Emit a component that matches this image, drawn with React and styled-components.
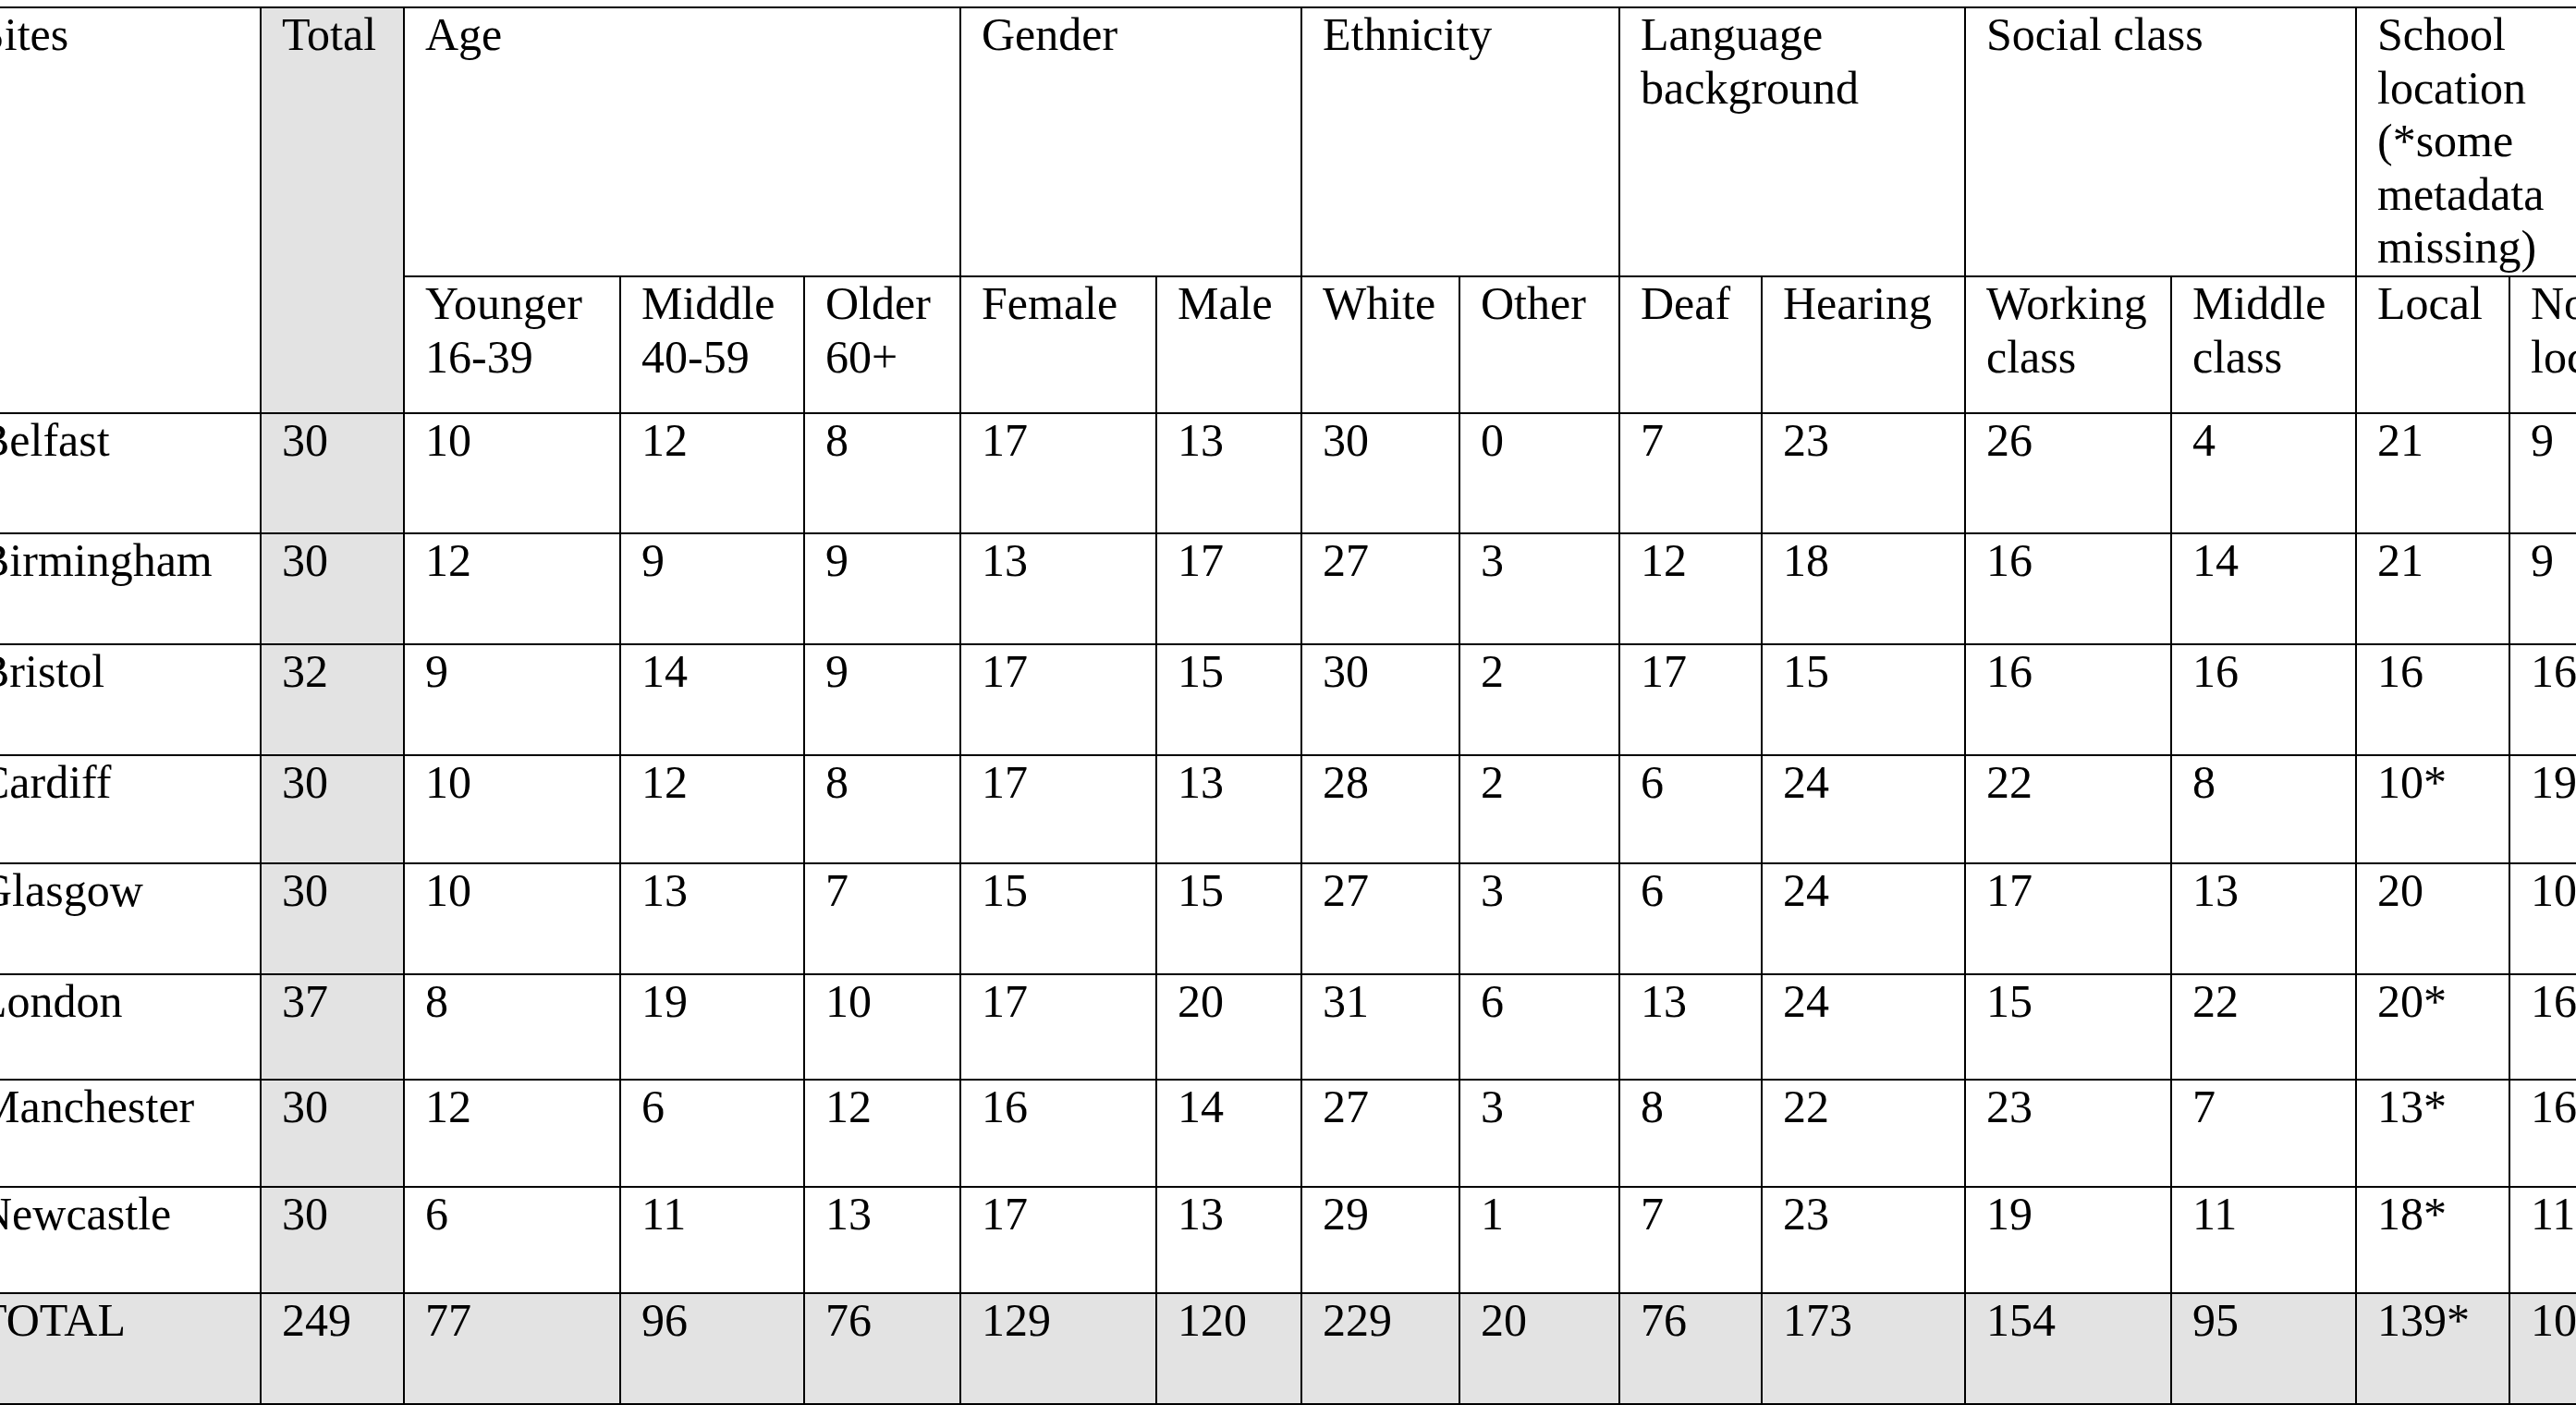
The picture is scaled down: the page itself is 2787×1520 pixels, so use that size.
import React from "react";
import styled, { createGlobalStyle } from "styled-components";

const GlobalStyle = createGlobalStyle`
  html, body {
    margin: 0;
    padding: 0;
    overflow: hidden;
    background: #ffffff;
  }
  body {
    font-family: "Liberation Serif", "Times New Roman", serif;
    color: #000000;
  }
`;

const Viewport = styled.div`
  width: 2787px;
  height: 1520px;
  overflow: hidden;
  padding-top: 7px;
  box-sizing: border-box;
`;

const COLUMN_WIDTHS = [326, 153, 232, 197, 167, 210, 155, 169, 171, 152, 218, 221, 198, 164, 168];
const ROW_HEIGHTS = [289, 146, 128, 118, 118, 115, 118, 112, 114, 113, 118];

const Sheet = styled.div`
  display: grid;
  grid-template-columns: ${COLUMN_WIDTHS.map((w) => `${w}px`).join(" ")};
  grid-template-rows: ${ROW_HEIGHTS.map((h) => `${h}px`).join(" ")};
  gap: 2px;
  padding: 2px;
  width: max-content;
  margin-left: -47px;
  background: #000000;
`;

const Cell = styled.div`
  grid-column: span ${(p) => p.$span || 1};
  grid-row: span ${(p) => p.$rows || 1};
  background: ${(p) => (p.$shade ? "#e3e3e3" : "#ffffff")};
  padding: 0 22px;
  font-size: 50px;
  line-height: 57.5px;
  overflow: visible;
  white-space: normal;
`;

const groups = [
  { label: "Age", span: 3 },
  { label: "Gender", span: 2 },
  { label: "Ethnicity", span: 2 },
  { label: "Language background", span: 2 },
  { label: "Social class", span: 2 },
  { label: "School location (*some metadata missing)", span: 2 },
];

const subHeads = [
  "Younger 16-39",
  "Middle 40-59",
  "Older 60+",
  "Female",
  "Male",
  "White",
  "Other",
  "Deaf",
  "Hearing",
  "Working class",
  "Middle class",
  "Local",
  "Not local",
];

const rows = [
  ["Belfast", "30", "10", "12", "8", "17", "13", "30", "0", "7", "23", "26", "4", "21", "9"],
  ["Birmingham", "30", "12", "9", "9", "13", "17", "27", "3", "12", "18", "16", "14", "21", "9"],
  ["Bristol", "32", "9", "14", "9", "17", "15", "30", "2", "17", "15", "16", "16", "16", "16"],
  ["Cardiff", "30", "10", "12", "8", "17", "13", "28", "2", "6", "24", "22", "8", "10*", "19"],
  ["Glasgow", "30", "10", "13", "7", "15", "15", "27", "3", "6", "24", "17", "13", "20", "10"],
  ["London", "37", "8", "19", "10", "17", "20", "31", "6", "13", "24", "15", "22", "20*", "16"],
  ["Manchester", "30", "12", "6", "12", "16", "14", "27", "3", "8", "22", "23", "7", "13*", "16"],
  ["Newcastle", "30", "6", "11", "13", "17", "13", "29", "1", "7", "23", "19", "11", "18*", "11"],
];

const totalRow = ["TOTAL", "249", "77", "96", "76", "129", "120", "229", "20", "76", "173", "154", "95", "139*", "106"];

export default function App() {
  return (
    <>
      <GlobalStyle />
      <Viewport>
        <Sheet role="table">
          <Cell $rows={2} role="columnheader">Sites</Cell>
          <Cell $rows={2} $shade role="columnheader">Total</Cell>
          {groups.map((g) => (
            <Cell key={g.label} $span={g.span} role="columnheader">
              {g.label}
            </Cell>
          ))}
          {subHeads.map((s) => (
            <Cell key={s} role="columnheader">
              {s}
            </Cell>
          ))}
          {rows.map((r) =>
            r.map((v, i) => (
              <Cell key={`${r[0]}-${i}`} $shade={i === 1} role="cell">
                {v}
              </Cell>
            ))
          )}
          {totalRow.map((v, i) => (
            <Cell key={`total-${i}`} $shade role="cell">
              {v}
            </Cell>
          ))}
        </Sheet>
      </Viewport>
    </>
  );
}
